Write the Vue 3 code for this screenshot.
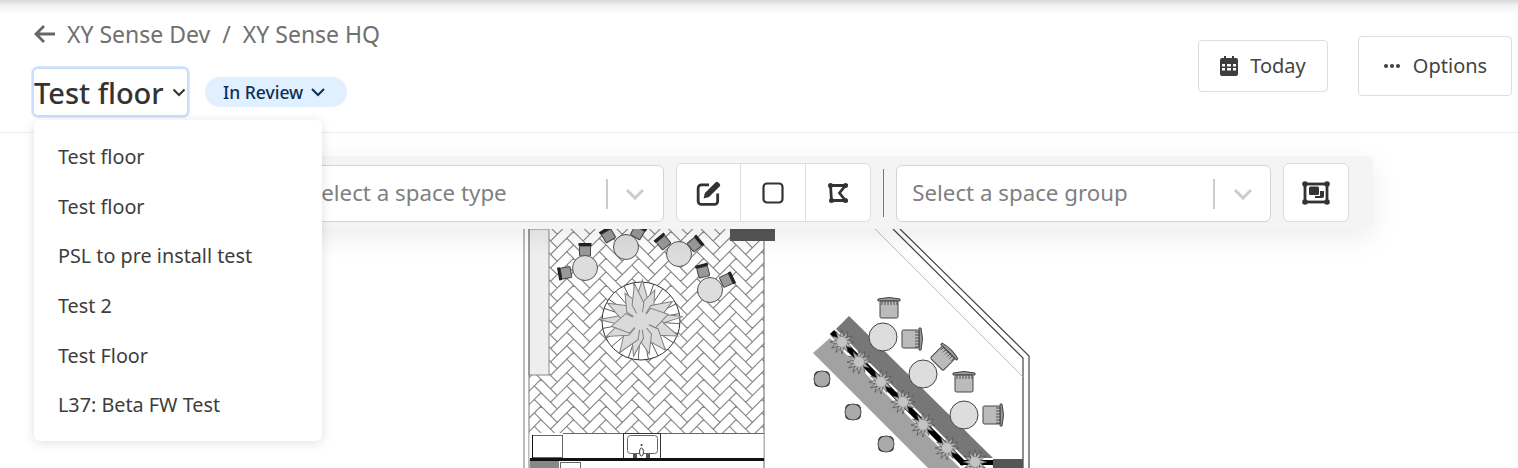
<script setup>
const floors = ['Test floor', 'Test floor', 'PSL to pre install test', 'Test 2', 'Test Floor', 'L37: Beta FW Test']

// herringbone bricks, drawn flat and rotated 45deg in the template
const brickL = 23
const brickW = 9.5
let hatch = ''
for (let i = -24; i <= 24; i++) {
  for (let j = -8; j <= 8; j++) {
    const x = i * brickW + j * brickL
    const y = i * brickW - j * brickL
    hatch += `M${x} ${y}h${brickL}v${brickW}h${-brickL}z`
    hatch += `M${x + brickL} ${y + brickW - brickL}h${brickW}v${brickL}h${-brickW}z`
  }
}

const spokes = Array.from({ length: 24 }, (_, i) => i * 15 + 4)
const leaves = [
  { a: 2, r: 41, w: 7 }, { a: 24, r: 34, w: 7 }, { a: 58, r: 37, w: 8 }, { a: 84, r: 42, w: 5 },
  { a: 112, r: 40, w: 8 }, { a: 140, r: 38, w: 8 }, { a: 166, r: 34, w: 7 }, { a: 192, r: 36, w: 6 },
  { a: 214, r: 38, w: 8 }, { a: 246, r: 38, w: 8 }, { a: 272, r: 42, w: 5 }, { a: 298, r: 38, w: 8 },
  { a: 330, r: 32, w: 8 }, { a: 350, r: 38, w: 6 }, { a: 76, r: 28, w: 10 }, { a: 260, r: 30, w: 10 }
]

const tables = [[585, 268], [626, 247], [679, 254], [710, 290]]
const seats = [
  { x: 585, y: 250, a: 0 }, { x: 565, y: 273, a: -100 },
  { x: 608, y: 235, a: -30 }, { x: 638, y: 232, a: 30 },
  { x: 663, y: 242, a: -40 }, { x: 695, y: 244, a: 50 },
  { x: 703, y: 271, a: -15 }, { x: 727, y: 280, a: 65 }
]
const bigTables = [[883, 337], [923, 374], [964, 415]]
const bigSeats = [
  { x: 889, y: 309, a: 0 }, { x: 911, y: 339, a: 90 },
  { x: 943, y: 358, a: 45 },
  { x: 964, y: 383, a: 0 }, { x: 992, y: 415, a: 90 }
]
const stools = [[822, 379], [853, 412], [886, 444]]
const shrubs = [[842, 342], [859, 362], [881, 382], [903, 402], [923, 425], [947, 448], [975, 462]]
const shrubAngles = Array.from({ length: 12 }, (_, i) => i * 30)
</script>

<template>
  <div class="page">
    <header class="header">
      <div class="title-side">
        <nav class="crumbs">
          <svg class="back" width="22" height="20" viewBox="0 0 22 20">
            <path d="M11 2L3 10l8 8M3 10h19" fill="none" stroke="#666" stroke-width="2.800" />
          </svg>
          <span>XY Sense Dev</span>
          <span class="slash">/</span>
          <span>XY Sense HQ</span>
        </nav>
        <div class="title-row">
          <button class="floor-select">
            <span>Test floor</span>
            <svg width="14" height="10" viewBox="0 0 14 10">
              <path d="M1.500 2.500L7 8l5.500-5.500" fill="none" stroke="#333" stroke-width="2" />
            </svg>
          </button>
          <span class="status">
            In Review
            <svg width="16" height="10" viewBox="0 0 16 10">
              <path d="M2 2l6 6 6-6" fill="none" stroke="#0b2f59" stroke-width="2" />
            </svg>
          </span>
        </div>
      </div>
      <div class="actions">
        <button class="btn btn-today">
          <svg width="18" height="20" viewBox="0 0 18 20">
            <path d="M4 0h2v3H4zM12 0h2v3h-2z" fill="#3d3d3d" />
            <path fill-rule="evenodd" fill="#3d3d3d" d="M2 2h14a2 2 0 0 1 2 2v14a2 2 0 0 1-2 2H2a2 2 0 0 1-2-2V4a2 2 0 0 1 2-2zM2 8v2.500h3V8zm5 0v2.500h4V8zm6 0v2.500h3V8zM2 12v2.500h3V12zm5 0v2.500h4V12zm6 0v2.500h3V12z" />
          </svg>
          Today
        </button>
        <button class="btn btn-options">
          <svg width="18" height="6" viewBox="0 0 18 6">
            <circle cx="3" cy="3" r="2" fill="#3d3d3d" />
            <circle cx="9" cy="3" r="2" fill="#3d3d3d" />
            <circle cx="15" cy="3" r="2" fill="#3d3d3d" />
          </svg>
          Options
        </button>
      </div>
    </header>

    <main class="canvas">
      <svg class="plan" width="1518" height="335" viewBox="0 133 1518 335">
        <defs>
          <clipPath id="room"><rect x="529" y="229" width="235" height="204" /></clipPath>
          <g id="small-seat">
            <rect x="-5.500" y="-4" width="11" height="10" rx="1" fill="#999" stroke="#444" />
            <rect x="-6.500" y="-7" width="13" height="3" fill="#222" />
          </g>
          <g id="big-seat">
            <path d="M-11 -10q11 -3 22 0v2h-22z" fill="#999" stroke="#444" />
            <rect x="-9" y="-8" width="18" height="17" rx="1.500" fill="#bbb" stroke="#444" />
            <path d="M-7 -8v4M-4 -8v4M-1 -8v4M2 -8v4M5 -8v4M8 -8v4" stroke="#333" stroke-width="0.8" />
          </g>
          <g id="shrub">
            <path v-for="a in shrubAngles" :key="a" d="M-2.500 -3L0 -12L2.500 -3z" fill="#b5b5b5" stroke="#444" stroke-width="0.6" :transform="`rotate(${a})`" />
            <circle r="5" fill="#c4c4c4" />
          </g>
        </defs>

        <!-- left room -->
        <g clip-path="url(#room)">
          <path :d="hatch" transform="translate(541 433) rotate(45)" fill="#fff" stroke="#888" stroke-width="1.100" />
        </g>
        <rect x="529" y="229" width="20" height="146" fill="#eee" stroke="#888" />
        <path d="M524 229V468M529 229V468" stroke="#777" fill="none" />
        <path d="M764 229V468" stroke="#666" fill="none" />
        <rect x="730" y="229" width="45" height="12" fill="#555" />
        <use v-for="(s, i) in seats" :key="'s' + i" href="#small-seat" :transform="`translate(${s.x} ${s.y}) rotate(${s.a})`" />
        <circle v-for="(c, i) in tables" :key="'c' + i" :cx="c[0]" :cy="c[1]" r="12.500" fill="#ddd" stroke="#555" />

        <circle cx="641" cy="321" r="39" fill="#fff" stroke="#333" />
        <path v-for="a in spokes" :key="'sp' + a" d="M641 321v-39" stroke="#444" stroke-width="0.8" :transform="`rotate(${a} 641 321)`" />
        <path v-for="l in leaves" :key="'l' + l.a" :d="`M0 0L${-l.w} ${-l.r * 0.45}L0 ${-l.r}L${l.w} ${-l.r * 0.45}z`" fill="#dadada" stroke="#808080" :transform="`translate(641 321) rotate(${l.a})`" />
        <circle cx="641" cy="321" r="9" fill="#dadada" />

        <!-- counter -->
        <rect x="529.500" y="433.500" width="234" height="26" fill="#fff" />
        <path d="M563 433.500H764" stroke="#666" />
        <rect x="532.500" y="435.500" width="30" height="22" fill="#fff" stroke="#666" />
        <path d="M532.500 435V458" stroke="#111" />
        <rect x="623.500" y="433.500" width="37" height="25" fill="#fff" stroke="#333" />
        <rect x="627.500" y="435.500" width="30" height="18" rx="3" fill="#fff" stroke="#666" />
        <ellipse cx="641.500" cy="452" rx="2" ry="4" fill="#fff" stroke="#444" />
        <circle cx="641.500" cy="445" r="1" fill="#333" />
        <rect x="633" y="454" width="4" height="4" fill="#555" />
        <rect x="646" y="454" width="4" height="4" fill="#555" />
        <rect x="530" y="458" width="234" height="3" fill="#111" />
        <rect x="530" y="461" width="29" height="7" fill="#888" />
        <rect x="560.500" y="462.500" width="20" height="7" fill="#fff" stroke="#666" />

        <!-- right room -->
        <path d="M900 229L1029 356V468M893 229L1023 358V468" fill="none" stroke="#444" stroke-width="1.200" />
        <path d="M875 229L1023 377" fill="none" stroke="#bbb" />
        <path d="M830 338L813 353L928 468H960z" fill="#a2a2a2" />
        <path d="M849 316L836 329L975 468H993V458z" fill="#777" />
        <path d="M832 332L900 400L968 468" stroke="#fff" stroke-width="8" fill="none" />
        <path d="M832 332L964 464" stroke="#000" stroke-width="6" fill="none" />
        <rect x="975" y="458" width="18" height="10" fill="#fff" />
        <rect x="960" y="460" width="33" height="5" fill="#000" />
        <rect x="993" y="459" width="30" height="9" fill="#555" />
        <use v-for="(s, i) in shrubs" :key="'sh' + i" href="#shrub" :transform="`translate(${s[0]} ${s[1]})`" />
        <use v-for="(s, i) in bigSeats" :key="'b' + i" href="#big-seat" :transform="`translate(${s.x} ${s.y}) rotate(${s.a})`" />
        <circle v-for="(c, i) in bigTables" :key="'bc' + i" :cx="c[0]" :cy="c[1]" r="14" fill="#ddd" stroke="#444" />
        <g v-for="(s, i) in stools" :key="'st' + i">
          <rect :x="s[0] - 8" :y="s[1] - 8" width="16" height="16" rx="5" fill="#222" />
          <circle :cx="s[0]" :cy="s[1]" r="8" fill="#aaa" stroke="#555" />
        </g>
      </svg>

      <div class="toolbar">
        <div class="select space-type">
          <span class="placeholder">Select a space type</span>
          <span class="indicator">
            <svg width="20" height="12" viewBox="0 0 20 12">
              <path d="M2 2l8 8 8-8" fill="none" stroke="#ccc" stroke-width="3" />
            </svg>
          </span>
        </div>
        <div class="tool-group">
          <button class="tool">
            <svg width="26" height="26" viewBox="0 0 24 24">
              <path d="M12 4.500H5a3 3 0 0 0-3 3v12a3 3 0 0 0 3 3h12a3 3 0 0 0 3-3v-7" fill="none" stroke="#333" stroke-width="2.600" />
              <path d="M7 17l1.200-5L18 2.200a1.800 1.800 0 0 1 2.500 0l1.300 1.300a1.800 1.800 0 0 1 0 2.500L12 15.800z" fill="#333" />
            </svg>
          </button>
          <button class="tool">
            <svg width="22" height="22" viewBox="0 0 22 22">
              <rect x="1.500" y="1.500" width="19" height="19" rx="3.500" fill="none" stroke="#333" stroke-width="2.200" />
            </svg>
          </button>
          <button class="tool">
            <svg width="20" height="20" viewBox="0 0 20 20">
              <path d="M2.500 2.500h15l-6 7.500 6 7.500h-14z" fill="none" stroke="#333" stroke-width="2.800" />
              <circle cx="2.500" cy="2.500" r="2.500" fill="#333" />
              <circle cx="17.500" cy="2.500" r="2.500" fill="#333" />
              <circle cx="3.500" cy="17.500" r="2.500" fill="#333" />
              <circle cx="17.500" cy="17.500" r="2.500" fill="#333" />
            </svg>
          </button>
        </div>
        <span class="divider"></span>
        <div class="select space-group">
          <span class="placeholder">Select a space group</span>
          <span class="indicator">
            <svg width="20" height="12" viewBox="0 0 20 12">
              <path d="M2 2l8 8 8-8" fill="none" stroke="#ccc" stroke-width="3" />
            </svg>
          </span>
        </div>
        <button class="tool tool-single">
          <svg width="28" height="24" viewBox="0 0 28 24">
            <rect x="3" y="3" width="22" height="18" fill="none" stroke="#333" stroke-width="2.800" />
            <circle cx="3" cy="3" r="2.800" fill="#333" />
            <circle cx="25" cy="3" r="2.800" fill="#333" />
            <circle cx="3" cy="21" r="2.800" fill="#333" />
            <circle cx="25" cy="21" r="2.800" fill="#333" />
            <rect x="7" y="5.500" width="10" height="8.500" rx="1.500" fill="#333" />
            <path d="M18 10h4v5a2 2 0 0 1-2 2h-7v-2h5z" fill="#333" />
          </svg>
        </button>
      </div>

      <ul class="menu">
        <li v-for="(floor, i) in floors" :key="i">{{ floor }}</li>
      </ul>
    </main>
  </div>
</template>

<style>
html, body {
  margin: 0;
  background: #fff;
  overflow: hidden;
}
</style>

<style scoped>
.page {
  width: 1518px;
  height: 468px;
  font-family: "Noto Sans", sans-serif;
  color: #333;
  overflow: hidden;
}

button {
  font-family: inherit;
}

.header {
  height: 132px;
  border-bottom: 1px solid #eceef1;
  display: flex;
  justify-content: space-between;
  background: linear-gradient(#d8d8d8 0, #f3f3f3 6px, #fff 14px);
}

.title-side {
  padding: 21px 0 0 33px;
}

.crumbs {
  display: flex;
  align-items: center;
  height: 26px;
  font-size: 23px;
  color: #707070;
}

.back {
  margin-right: 12px;
}

.slash {
  margin: 0 12px;
}

.title-row {
  display: flex;
  align-items: center;
  margin-top: 20px;
}

.floor-select {
  width: 157px;
  height: 50px;
  margin-left: -1px;
  display: flex;
  align-items: center;
  gap: 8px;
  padding: 0;
  font-size: 29px;
  font-weight: 500;
  color: #333;
  background: #fff;
  border: 2px solid #c9defc;
  border-radius: 6px;
  box-shadow: 0 0 0 1px #dbe8fd;
  box-sizing: border-box;
}

.status {
  margin-left: 16px;
  height: 30px;
  width: 142px;
  box-sizing: border-box;
  border-radius: 15px;
  background: #e1f0fe;
  color: #0b2f59;
  font-size: 17.500px;
  font-weight: 500;
  display: flex;
  align-items: center;
  gap: 7px;
  padding-left: 18px;
}

.actions {
  display: flex;
  align-items: center;
  gap: 30px;
  padding: 0 6px 0 0;
  margin-top: -1px;
}

.btn {
  display: flex;
  align-items: center;
  justify-content: center;
  background: #fff;
  border: 1px solid #ddd;
  border-radius: 4px;
  font-size: 20px;
  color: #444;
  box-sizing: border-box;
}

.btn-today {
  width: 130px;
  height: 52px;
  gap: 12px;
}

.btn-options {
  width: 154px;
  height: 60px;
  gap: 12px;
}

.canvas {
  position: relative;
  height: 335px;
}

.plan {
  position: absolute;
  top: 0;
  left: 0;
}

.toolbar {
  position: absolute;
  top: 23px;
  left: 270px;
  width: 1103px;
  height: 73px;
  box-sizing: border-box;
  padding: 8px 24px 8px 0;
  background: #f4f4f4;
  border-radius: 8px;
  box-shadow: 0 8px 28px rgba(0, 0, 0, 0.08);
  display: flex;
  align-items: center;
}

.select {
  height: 57px;
  margin-top: 2px;
  box-sizing: border-box;
  background: #fff;
  border: 1px solid #d4d4d4;
  border-radius: 6px;
  display: flex;
  align-items: center;
  justify-content: space-between;
  font-size: 22.300px;
  color: #808080;
}

.space-type {
  width: 394px;
  padding-left: 38px;
  margin-right: 12px;
}

.space-group {
  width: 375px;
  padding-left: 15px;
  margin-right: 12px;
}

.placeholder {
  position: relative;
  top: -1px;
}

.indicator {
  width: 55px;
  height: 30px;
  border-left: 2px solid #ccc;
  display: flex;
  align-items: center;
  justify-content: center;
}

.tool-group {
  display: flex;
  height: 59px;
  box-sizing: border-box;
  background: #fff;
  border: 1px solid #ddd;
  border-radius: 6px;
}

.tool {
  width: 64.500px;
  height: 100%;
  padding: 0;
  display: flex;
  align-items: center;
  justify-content: center;
  background: none;
  border: none;
  border-right: 1px solid #ddd;
}

.tool:last-child {
  border-right: none;
}

.divider {
  width: 1px;
  height: 48px;
  background: #777;
  margin: 0 12px;
}

.tool-single {
  width: 66px;
  height: 59px;
  background: #fff;
  border: 1px solid #ddd;
  border-radius: 6px;
  box-sizing: border-box;
}

.tool-single:last-child {
  border-right: 1px solid #ddd;
}

.menu {
  position: absolute;
  top: -13px;
  left: 34px;
  width: 288px;
  height: 321px;
  box-sizing: border-box;
  margin: 0;
  padding: 12px 0;
  list-style: none;
  background: #fff;
  border-radius: 6px;
  box-shadow: 0 2px 12px rgba(0, 0, 0, 0.12);
  font-size: 19.800px;
  color: #3d3d3d;
}

.menu li {
  height: 49.600px;
  display: flex;
  align-items: center;
  padding-left: 24px;
}
</style>
